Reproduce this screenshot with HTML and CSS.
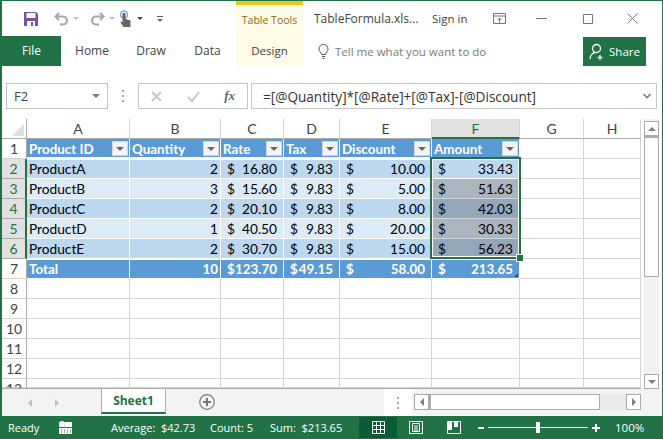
FILE: index.html
```html
<!DOCTYPE html>
<html lang="en">
<head>
  <meta charset="UTF-8">
  <title>TableFormula.xlsx - Excel</title>
  <link rel="stylesheet" href="styles.css">
</head>
<body>

<div class="app">
  <!-- title bar -->
  <div class="titlebar">
    <div class="qat">
      <svg class="ico save" width="16" height="16" viewBox="0 0 16 16"><path d="M1 1h12l2 2v12H1z" fill="#7c5199"/><rect x="3.500" y="2" width="9" height="5" fill="#fff"/><rect x="4" y="10" width="8" height="5" fill="#fff"/><rect x="8" y="11" width="2" height="4" fill="#7c5199"/></svg>
      <svg class="ico undo" width="15" height="14" viewBox="0 0 15 14"><path d="M5 1 1.500 4.500 5 8M2 4.500h7a4 4 0 0 1 0 8H6" fill="none" stroke="#a6a6a6" stroke-width="2"/></svg>
      <span class="caret small"></span>
      <svg class="ico redo" width="15" height="14" viewBox="0 0 15 14"><path d="M10 1l3.500 3.500L10 8M13 4.500H6a4 4 0 0 0 0 8h3" fill="none" stroke="#a6a6a6" stroke-width="2"/></svg>
      <span class="caret small"></span>
      <svg class="ico touch" width="13" height="17" viewBox="0 0 13 17"><circle cx="5" cy="4.500" r="3.500" fill="none" stroke="#7ea6d8" stroke-width="1.500"/><path d="M3.500 3h3v6l5 1.500V17H4.500L1 11.500l2.500.500z" fill="#666"/></svg>
      <span class="caret dark"></span>
      <span class="customize"></span>
    </div>
    <div class="tools-label">Table Tools</div>
    <div class="doc-name">TableFormula.xls...</div>
    <div class="sign-in">Sign in</div>
    <svg class="ico display" width="13" height="11" viewBox="0 0 13 11"><path d="M.5.500h12v10H.5zM.5 3h12M6.500 10V5M4.500 7l2-2 2 2" fill="none" stroke="#767676"/></svg>
    <svg class="ico minimize" width="11" height="11" viewBox="0 0 11 11"><path d="M0 5.500h11" stroke="#767676"/></svg>
    <svg class="ico maximize" width="10" height="10" viewBox="0 0 10 10"><path d="M.5.500h9v9h-9z" fill="none" stroke="#767676"/></svg>
    <svg class="ico close" width="11" height="11" viewBox="0 0 11 11"><path d="M.5.500l10 10M10.500.500l-10 10" stroke="#767676"/></svg>
  </div>

  <!-- ribbon tabs -->
  <div class="tabs">
    <div class="tab file">File</div>
    <div class="tab home">Home</div>
    <div class="tab draw">Draw</div>
    <div class="tab data">Data</div>
    <div class="tab design">Design</div>
    <svg class="ico bulb" width="11" height="15" viewBox="0 0 11 15"><path d="M3.500 10.500C3 8 1 7.500 1 5a4.500 4.500 0 0 1 9 0c0 2.500-2 3-2.500 5.500zM4 12.500h3M4.500 14.500h2" fill="none" stroke="#555"/></svg>
    <div class="tell">Tell me what you want to do</div>
    <div class="share">
      <svg width="16" height="17" viewBox="0 0 16 17"><circle cx="7.500" cy="5.500" r="4" fill="none" stroke="#fff" stroke-width="1.300"/><path d="M1 16c0-3.500 2.500-6 5-6.500M11 12v5M8.500 14.500h5" fill="none" stroke="#fff" stroke-width="1.300"/></svg>
      <span>Share</span>
    </div>
  </div>

  <!-- formula bar -->
  <div class="formula-bar">
    <div class="name-box"><span>F2</span><span class="caret gray"></span></div>
    <div class="dots"><i></i><i></i><i></i></div>
    <div class="fx-box">
      <svg width="11" height="11" viewBox="0 0 11 11"><path d="M1 1l9 9M10 1l-9 9" stroke="#c8c8c8" stroke-width="2"/></svg>
      <svg width="13" height="11" viewBox="0 0 13 11"><path d="M1 6l4 4 7-9" fill="none" stroke="#c8c8c8" stroke-width="2"/></svg>
      <span class="fx">fx</span>
    </div>
    <div class="formula-input">
      <span>=[@Quantity]*[@Rate]+[@Tax]-[@Discount]</span>
      <svg width="8" height="6" viewBox="0 0 8 6"><path d="M.5 1l3.500 3.500L7.500 1" fill="none" stroke="#808080" stroke-width="1.600"/></svg>
    </div>
  </div>

  <!-- sheet -->
  <div class="sheet-area">
    <div class="sheet">
      <div class="corner"><span></span></div>
      <div class="col">A</div><div class="col">B</div><div class="col">C</div><div class="col">D</div><div class="col">E</div><div class="col sel">F</div><div class="col">G</div><div class="col">H</div>

      <div class="row">1</div>
      <div class="th">Product ID<b></b></div><div class="th">Quantity<b></b></div><div class="th">Rate<b></b></div><div class="th">Tax<b></b></div><div class="th">Discount<b></b></div><div class="th">Amount<b></b></div><div class="c"></div><div class="c"></div>

      <div class="row sel">2</div>
      <div class="td a">ProductA</div><div class="td a r">2</div><div class="td a m"><i>$</i>16.80</div><div class="td a m"><i>$</i>9.83</div><div class="td a m"><i>$</i>10.00</div><div class="td a m"><i>$</i>33.43</div><div class="c"></div><div class="c"></div>

      <div class="row sel">3</div>
      <div class="td b">ProductB</div><div class="td b r">3</div><div class="td b m"><i>$</i>15.60</div><div class="td b m"><i>$</i>9.83</div><div class="td b m"><i>$</i>5.00</div><div class="td m s1"><i>$</i>51.63</div><div class="c"></div><div class="c"></div>

      <div class="row sel">4</div>
      <div class="td a">ProductC</div><div class="td a r">2</div><div class="td a m"><i>$</i>20.10</div><div class="td a m"><i>$</i>9.83</div><div class="td a m"><i>$</i>8.00</div><div class="td m s2"><i>$</i>42.03</div><div class="c"></div><div class="c"></div>

      <div class="row sel">5</div>
      <div class="td b">ProductD</div><div class="td b r">1</div><div class="td b m"><i>$</i>40.50</div><div class="td b m"><i>$</i>9.83</div><div class="td b m"><i>$</i>20.00</div><div class="td m s1"><i>$</i>30.33</div><div class="c"></div><div class="c"></div>

      <div class="row sel">6</div>
      <div class="td a">ProductE</div><div class="td a r">2</div><div class="td a m"><i>$</i>30.70</div><div class="td a m"><i>$</i>9.83</div><div class="td a m"><i>$</i>15.00</div><div class="td m s2"><i>$</i>56.23</div><div class="c"></div><div class="c"></div>

      <div class="row">7</div>
      <div class="td t">Total</div><div class="td t r">10</div><div class="td t m"><i>$</i>123.70</div><div class="td t m"><i>$</i>49.15</div><div class="td t m"><i>$</i>58.00</div><div class="td t m corner-mark"><i>$</i>213.65</div><div class="c"></div><div class="c"></div>

      <div class="row">8</div><div class="c"></div><div class="c"></div><div class="c"></div><div class="c"></div><div class="c"></div><div class="c"></div><div class="c"></div><div class="c"></div>
      <div class="row">9</div><div class="c"></div><div class="c"></div><div class="c"></div><div class="c"></div><div class="c"></div><div class="c"></div><div class="c"></div><div class="c"></div>
      <div class="row">10</div><div class="c"></div><div class="c"></div><div class="c"></div><div class="c"></div><div class="c"></div><div class="c"></div><div class="c"></div><div class="c"></div>
      <div class="row">11</div><div class="c"></div><div class="c"></div><div class="c"></div><div class="c"></div><div class="c"></div><div class="c"></div><div class="c"></div><div class="c"></div>
      <div class="row">12</div><div class="c"></div><div class="c"></div><div class="c"></div><div class="c"></div><div class="c"></div><div class="c"></div><div class="c"></div><div class="c"></div>
      <div class="row last">13</div><div class="c"></div><div class="c"></div><div class="c"></div><div class="c"></div><div class="c"></div><div class="c"></div><div class="c"></div><div class="c"></div>

      <div class="selection"><span class="handle"></span></div>
    </div>

    <div class="vscroll">
      <div class="sbtn"><span class="arrow up"></span></div>
      <div class="vthumb"></div>
      <div class="vtrack"></div>
      <div class="sbtn"><span class="arrow down"></span></div>
    </div>
  </div>

  <!-- sheet tabs -->
  <div class="sheet-tabs">
    <span class="nav-arrow left"></span>
    <span class="nav-arrow right"></span>
    <div class="sheet-tab">Sheet1</div>
    <svg class="add-sheet" width="16" height="16" viewBox="0 0 16 16"><circle cx="8" cy="8" r="7.300" fill="none" stroke="#777" stroke-width="1.200"/><path d="M8 4v8M4 8h8" stroke="#777" stroke-width="2"/></svg>
    <div class="split"><i></i><i></i><i></i></div>
    <div class="hscroll">
      <div class="hbtn"><span class="arrow left"></span></div>
      <div class="hthumb"></div>
      <div class="htrack"></div>
      <div class="hbtn"><span class="arrow right"></span></div>
    </div>
  </div>

  <!-- status bar -->
  <div class="statusbar">
    <span class="ready">Ready</span>
    <svg class="macro" width="13" height="13" viewBox="0 0 13 13"><circle cx="3" cy="3" r="3" fill="#fff"/><path d="M0 6h13V1H6v4H0z" fill="#fff"/><path d="M0 7h13v6H0z" fill="#fff"/><path d="M2 9h1M5 9h1M8 9h1M11 9h1M2 11h1M5 11h1M8 11h1M11 11h1" stroke="#217346"/></svg>
    <span class="average">Average:&nbsp; $42.73</span>
    <span class="count">Count: 5</span>
    <span class="sum">Sum:&nbsp; $213.65</span>
    <div class="view active">
      <svg width="13" height="13" viewBox="0 0 13 13"><path d="M.5.500h12v12H.5zM4.500.500v12M8.500.500v12M.5 4.500h12M.5 8.500h12" fill="none" stroke="#fff"/></svg>
    </div>
    <div class="view">
      <svg width="14" height="13" viewBox="0 0 14 13"><path d="M.5.500h13v12H.5zM3.500 2.500h7v8h-7zM5 5h4M5 7h4M5 9h4" fill="none" stroke="#fff"/></svg>
    </div>
    <div class="view">
      <svg width="14" height="13" viewBox="0 0 14 13"><path d="M.5.500h13v12H.5z" fill="none" stroke="#fff"/><path d="M1 1h4v8H1zM7 1h4v5H7z" fill="#fff"/></svg>
    </div>
    <div class="zoom">
      <span class="minus"></span>
      <div class="slider"><span class="knob"></span></div>
      <span class="plus"></span>
    </div>
    <span class="percent">100%</span>
  </div>
</div>

</body>
</html>
```

FILE: styles.css
```css
* {
  box-sizing: border-box;
}
html, body {
  margin: 0;
  height: 100%;
}
body {
  background-color: #fff;
  color: #444;
  font-family: "Open Sans", "Noto Sans", sans-serif;
  font-size: 12px;
}
.app {
  width: 663px;
  height: 439px;
  overflow: hidden;
  display: flex;
  flex-direction: column;
  border: 1px solid #217346;
  border-bottom: 0;
  border-left-width: 2px;
}
.ico {
  display: block;
  flex: none;
}

/* title bar */
.titlebar {
  height: 35px;
  display: flex;
  align-items: center;
  flex: none;
}
.qat {
  width: 234px;
  display: flex;
  align-items: center;
}
.save { margin-left: 21px; }
.undo { margin-left: 15px; }
.redo { margin-left: 11px; }
.touch { margin-left: 4px; }
.caret {
  width: 0;
  height: 0;
  border-left: 4px solid transparent;
  border-right: 4px solid transparent;
  border-top: 4px solid #707070;
  display: block;
}
.caret.small {
  margin-left: 4px;
  border-width: 3px 3px 0;
  border-top-color: #c0c0c0;
}
.caret.dark {
  margin-left: 5px;
  border-width: 3px 3px 0;
  border-top-color: #444;
}
.customize {
  margin-left: 14px;
  width: 6px;
  height: 6px;
  border-top: 1px solid #666;
  position: relative;
}
.customize::after {
  content: "";
  position: absolute;
  left: 0;
  top: 2px;
  border-left: 3px solid transparent;
  border-right: 3px solid transparent;
  border-top: 3px solid #666;
}
.tools-label {
  width: 67px;
  height: 35px;
  background-color: #fffbe9;
  border-top: 4px solid #ebc916;
  color: #8e6d0d;
  text-align: center;
  line-height: 30px;
  font-size: 10.5px;
}
.doc-name {
  margin-left: 11px;
  width: 108px;
  color: #444;
  white-space: nowrap;
}
.sign-in { margin-left: 10px; width: 52px; font-size: 11.5px; }
.display { margin-left: 9px; }
.minimize { margin-left: 30px; }
.maximize { margin-left: 36px; }
.close { margin-left: 34px; }

/* ribbon tabs */
.tabs {
  height: 30px;
  display: flex;
  align-items: center;
  flex: none;
}
.tab {
  height: 30px;
  line-height: 30px;
  text-align: center;
  color: #444;
}
.tab.file {
  width: 59px;
  background-color: #217346;
  color: #fff;
}
.tab.home { width: 62px; }
.tab.draw { width: 56px; }
.tab.data { width: 57px; }
.tab.design {
  width: 67px;
  background-color: #fffbe9;
  font-size: 11.5px;
}
.bulb { margin-left: 15px; }
.tell {
  margin-left: 6px;
  width: 248px;
  color: #7b7b7b;
  font-size: 11.5px;
  white-space: nowrap;
}
.share {
  width: 63px;
  height: 29px;
  background-color: #217346;
  color: #fff;
  font-size: 11.5px;
  display: flex;
  align-items: center;
  justify-content: center;
  gap: 4px;
}

/* formula bar */
.formula-bar {
  flex: none;
  height: 26px;
  margin-top: 17px;
  display: flex;
  align-items: stretch;
}
.name-box {
  margin-left: 4px;
  width: 102px;
  border: 1px solid #c6c6c6;
  display: flex;
  align-items: center;
  justify-content: space-between;
  padding: 0 7px;
  color: #444;
  font-size: 13px;
}
.caret.gray { border-top-color: #808080; }
.dots {
  width: 30px;
  display: flex;
  flex-direction: column;
  align-items: center;
  justify-content: center;
  gap: 3px;
}
.dots i, .split i {
  display: block;
  width: 2px;
  height: 2px;
  background-color: #a6a6a6;
}
.fx-box {
  width: 110px;
  border: 1px solid #c6c6c6;
  display: flex;
  align-items: center;
  justify-content: space-between;
  padding: 0 12px;
}
.fx {
  font-family: "Liberation Serif", serif;
  font-style: italic;
  font-weight: bold;
  font-size: 13px;
  color: #666;
}
.formula-input {
  margin-left: 3px;
  width: 406px;
  border: 1px solid #c6c6c6;
  display: flex;
  align-items: center;
  justify-content: space-between;
  padding: 0 5px 0 11px;
  color: #333;
  font-size: 13.6px;
}

/* sheet */
.sheet-area {
  flex: none;
  height: 270px;
  margin-top: 10px;
  display: flex;
}
.sheet {
  position: relative;
  width: 639px;
  height: 270px;
  overflow: hidden;
  display: grid;
  grid-template-columns: 25px 103px 91px 63px 56px 92px 88px 64px 57px;
  grid-template-rows: 20px repeat(12, 20px) 9px;
  border-bottom: 1px solid #ababab;
  font-family: Lato, "Open Sans", sans-serif;
  font-size: 13.7px;
  color: #000;
}
.sheet > div {
  min-width: 0;
  white-space: nowrap;
}
.corner {
  background-color: #fff;
  border-right: 1px solid #ababab;
  border-bottom: 1px solid #ababab;
  display: flex;
  align-items: flex-end;
  justify-content: flex-end;
  padding: 2px;
}
.corner span {
  width: 0;
  height: 0;
  border-left: 12px solid transparent;
  border-bottom: 12px solid #dfdfdf;
}
.col {
  text-align: center;
  line-height: 20px;
  color: #444;
  border-right: 1px solid #d4d4d4;
  border-bottom: 1px solid #ababab;
  font-size: 14px;
}
.col.sel {
  background-color: #e1e1e1;
  color: #217346;
  border-bottom: 2px solid #217346;
}
.row {
  text-align: center;
  line-height: 20px;
  color: #444;
  border-right: 1px solid #ababab;
  border-bottom: 1px solid #d4d4d4;
  font-size: 14px;
}
.row.sel {
  background-color: #e1e1e1;
  color: #217346;
  border-right: 2px solid #217346;
  border-bottom-color: #ababab;
}
.row.last {
  line-height: 19px;
}
.c {
  border-right: 1px solid #d4d4d4;
  border-bottom: 1px solid #d4d4d4;
}
.th {
  position: relative;
  background-color: #5b9bd5;
  color: #fff;
  font-weight: bold;
  font-size: 13.4px;
  line-height: 20px;
  padding: 0 2px;
  border-right: 1px solid #fff;
  border-bottom: 2px solid #fff;
  box-shadow: 0 1px 0 #fff;
}
.th b {
  position: absolute;
  right: 1px;
  top: 2px;
  width: 16px;
  height: 15px;
  background-color: #f4f4f4;
  border: 1px solid #d4d4d4;
}
.th b::after {
  content: "";
  position: absolute;
  left: 3px;
  top: 5px;
  border-left: 4px solid transparent;
  border-right: 4px solid transparent;
  border-top: 4px solid #666;
}
.td {
  padding: 0 2px;
  line-height: 20px;
  border-right: 1px solid #fff;
  border-bottom: 1px solid #fff;
}
.td.a { background-color: #bdd7ee; }
.td.b { background-color: #ddebf7; }
.td.s1 {
  background-color: #abb5bf;
  border-color: #d0d5da;
}
.td.s2 {
  background-color: #94a6b8;
  border-color: #d0d5da;
}
.td.t {
  background-color: #5b9bd5;
  color: #fff;
  font-weight: bold;
  font-size: 13.4px;
  border-top: 1px solid #fff;
  line-height: 18px;
}
.r { text-align: right; }
.td.m {
  display: flex;
  justify-content: space-between;
  padding: 0 6px 0 6px;
}
.m i {
  font-style: normal;
}
.corner-mark {
  position: relative;
}
.corner-mark::after {
  content: "";
  position: absolute;
  right: 1px;
  bottom: 1px;
  border-left: 4px solid transparent;
  border-bottom: 4px solid #2f4f9f;
}
.selection {
  position: absolute;
  grid-area: 3 / 7 / 8 / 8;
  inset: -2px -1px 0 -2px;
  border: 2px solid #217346;
  box-shadow: inset 0 0 0 1px #fff;
  pointer-events: none;
}
.handle {
  position: absolute;
  right: -4px;
  bottom: -4px;
  width: 6px;
  height: 6px;
  background-color: #217346;
  box-shadow: 0 0 0 1px #fff;
}

/* scrollbars */
.vscroll {
  margin-left: 3px;
  width: 15px;
  display: flex;
  flex-direction: column;
  background-color: #f1f1f1;
}
.sbtn {
  width: 15px;
  height: 15px;
  flex: none;
  background-color: #fff;
  border: 1px solid #ababab;
  display: flex;
  align-items: center;
  justify-content: center;
}
.vscroll .sbtn:first-child { margin-top: 2px; }
.vthumb {
  height: 141px;
  background-color: #fff;
  border: 1px solid #ababab;
  border-top-width: 2px;
}
.vtrack {
  flex: 1;
}
.arrow {
  display: block;
  width: 0;
  height: 0;
  border: 0 solid transparent;
}
.arrow.up {
  border-width: 0 4px 4px;
  border-bottom-color: #808080;
}
.arrow.down {
  border-width: 4px 4px 0;
  border-top-color: #808080;
}
.arrow.left {
  border-width: 4px 4px 4px 0;
  border-right-color: #808080;
}
.arrow.right {
  border-width: 4px 0 4px 4px;
  border-left-color: #808080;
}

/* sheet tabs */
.sheet-tabs {
  flex: none;
  height: 27px;
  background-color: #f3f3f3;
  display: flex;
  align-items: flex-start;
}
.nav-arrow {
  margin-top: 10px;
  width: 0;
  height: 0;
  border: 0 solid transparent;
}
.nav-arrow.left {
  margin-left: 26px;
  border-width: 4px 4px 4px 0;
  border-right-color: #c0c0c0;
}
.nav-arrow.right {
  margin-left: 23px;
  border-width: 4px 0 4px 4px;
  border-left-color: #c0c0c0;
}
.sheet-tab {
  margin-left: 42px;
  margin-top: -1px;
  width: 65px;
  height: 26px;
  background-color: #fff;
  border: 1px solid #ababab;
  border-top: 0;
  border-bottom: 2px solid #217346;
  text-align: center;
  line-height: 25px;
  font-weight: bold;
  color: #217346;
}
.add-sheet {
  margin-left: 33px;
  margin-top: 5px;
}
.split {
  margin-left: 169px;
  width: 28px;
  height: 27px;
  background-color: #fff;
  display: flex;
  flex-direction: column;
  align-items: center;
  justify-content: center;
  gap: 3px;
}
.hscroll {
  margin-left: 2px;
  margin-top: 5px;
  width: 227px;
  height: 16px;
  display: flex;
  background-color: #e9e9e9;
}
.hbtn {
  width: 15px;
  height: 16px;
  flex: none;
  background-color: #fff;
  border: 1px solid #ababab;
  display: flex;
  align-items: center;
  justify-content: center;
}
.hthumb {
  width: 171px;
  background-color: #fff;
  border: 1px solid #ababab;
  border-left-width: 2px;
}
.htrack { flex: 1; }

/* status bar */
.statusbar {
  flex: none;
  height: 23px;
  background-color: #217346;
  color: #fff;
  display: flex;
  align-items: center;
  font-size: 11px;
  white-space: nowrap;
  margin-left: -2px;
  margin-right: -1px;
}
.ready { margin-left: 8px; width: 51px; }
.macro { flex: none; }
.average { margin-left: 39px; width: 99px; }
.count { width: 60px; }
.sum { width: 89px; }
.view {
  width: 38px;
  height: 21px;
  display: flex;
  align-items: center;
  justify-content: center;
}
.view.active { background-color: #0a5c34; }
.zoom {
  margin-left: 5px;
  display: flex;
  align-items: center;
  width: 125px;
}
.minus {
  width: 6px;
  height: 2px;
  background-color: #fff;
}
.slider {
  position: relative;
  margin-left: 4px;
  width: 100px;
  height: 1px;
  background-color: #fff;
}
.knob {
  position: absolute;
  left: 48px;
  top: -5px;
  width: 4px;
  height: 11px;
  background-color: #fff;
}
.plus {
  position: relative;
  margin-left: 4px;
  width: 8px;
  height: 2px;
  background-color: #fff;
}
.plus::after {
  content: "";
  position: absolute;
  left: 3px;
  top: -3px;
  width: 2px;
  height: 8px;
  background-color: #fff;
}
.percent { margin-left: 12px; font-size: 11.5px; }
```
